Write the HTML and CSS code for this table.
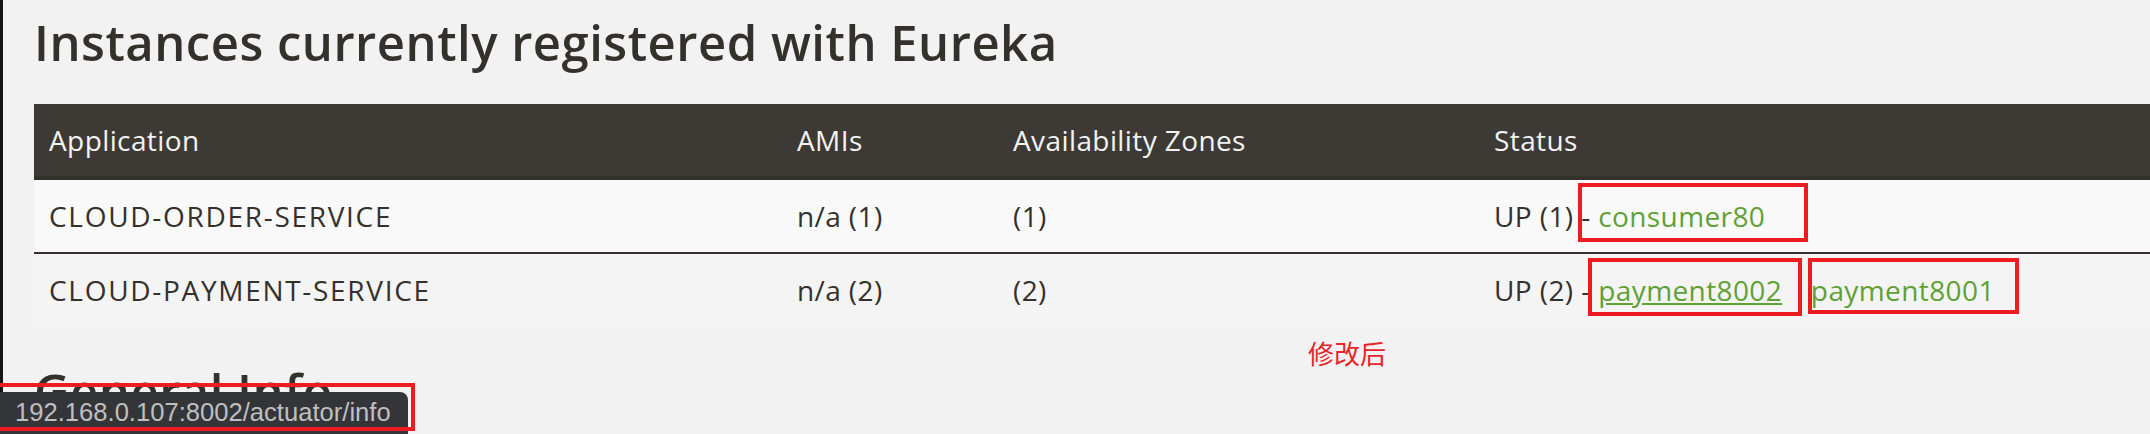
FILE: index.html
```html
<!DOCTYPE html>
<html lang="en">
<head>
<meta charset="utf-8">
<title>Eureka</title>
<link rel="stylesheet" href="styles.css">
</head>
<body>
<div class="page">
  <h2 class="title">Instances currently registered with Eureka</h2>
  <table class="instances">
    <colgroup>
      <col class="c-app"><col class="c-ami"><col class="c-zone"><col class="c-status">
    </colgroup>
    <thead>
      <tr><th>Application</th><th>AMIs</th><th>Availability Zones</th><th>Status</th></tr>
    </thead>
    <tbody>
      <tr class="odd">
        <td class="app">CLOUD-ORDER-SERVICE</td><td>n/a (1)</td><td>(1)</td>
        <td>UP (1) - <a href="#" class="inst">consumer80</a></td>
      </tr>
      <tr class="even">
        <td class="app">CLOUD-PAYMENT-SERVICE</td><td>n/a (2)</td><td>(2)</td>
        <td>UP (2) - <a href="#" class="inst hover">payment8002</a> <a href="#" class="inst next">payment8001</a></td>
      </tr>
    </tbody>
  </table>
  <h2 class="title second">General Info</h2>
</div>

<div class="note">修改后</div>
<div class="mark m1"></div>
<div class="mark m2"></div>
<div class="mark m3"></div>
<div class="status-bubble">192.168.0.107:8002/actuator/info</div>
<div class="mark m4"></div>
</body>
</html>
```

FILE: styles.css
```css
html, body {
  margin: 0;
  padding: 0;
  height: 100%;
  overflow: hidden;
}
body {
  background: #f2f2f2;
  position: relative;
  font-family: "Open Sans", "Noto Sans", sans-serif;
  color: #34302c;
}
.page {
  border-left: 3px solid #161616;
  padding-left: 31px;
  min-height: 100%;
  box-sizing: border-box;
}
.title {
  margin: 0;
  padding-top: 15px;
  font-size: 49px;
  line-height: 54px;
  font-weight: 600;
  color: #34302c;
  letter-spacing: 0.5px;
}
.title.second {
  padding-top: 38px;
}
.instances {
  margin-top: 35px;
  border-collapse: collapse;
  width: 2200px;
  table-layout: fixed;
  font-size: 28px;
  letter-spacing: 0.4px;
}
.c-app { width: 748px; }
.c-ami { width: 216px; }
.c-zone { width: 481px; }
.instances th {
  background: #3d3a35;
  color: #f3f3f3;
  text-align: left;
  font-weight: 500;
  height: 72px;
  padding: 0 15px;
  border-bottom: 4px solid #34312d;
}
.instances td {
  height: 72px;
  padding: 0 15px;
  white-space: nowrap;
}
.instances td.app {
  letter-spacing: 1.7px;
}
.instances tr.odd td {
  background: #f9f9f9;
  border-bottom: 2px solid #34312d;
}
.instances tr.even td {
  background: #f4f4f4;
}
.inst {
  color: #5fa134;
  text-decoration: none;
}
.inst.hover {
  text-decoration: underline;
}
.inst.next {
  margin-left: 21px;
}
.note {
  position: absolute;
  left: 1308px;
  top: 333px;
  font-family: "Noto Sans CJK SC", sans-serif;
  font-size: 26px;
  line-height: 40px;
  color: #ea2328;
}
.mark {
  position: absolute;
  border: 4px solid #ee1c21;
  box-sizing: border-box;
}
.m1 { left: 1578px; top: 183px; width: 230px; height: 59px; }
.m2 { left: 1588px; top: 258px; width: 214px; height: 58px; }
.m3 { left: 1808px; top: 258px; width: 211px; height: 56px; }
.m4 { left: -4px; top: 383px; width: 419px; height: 48px; }
.status-bubble {
  position: absolute;
  left: 0;
  top: 392px;
  width: 408px;
  height: 48px;
  box-sizing: border-box;
  background: #343538;
  border-top-right-radius: 8px;
  padding-left: 15px;
  font-family: "Liberation Sans", Arial, sans-serif;
  font-size: 25.6px;
  line-height: 40px;
  color: #bfbfc0;
  white-space: nowrap;
}
```
